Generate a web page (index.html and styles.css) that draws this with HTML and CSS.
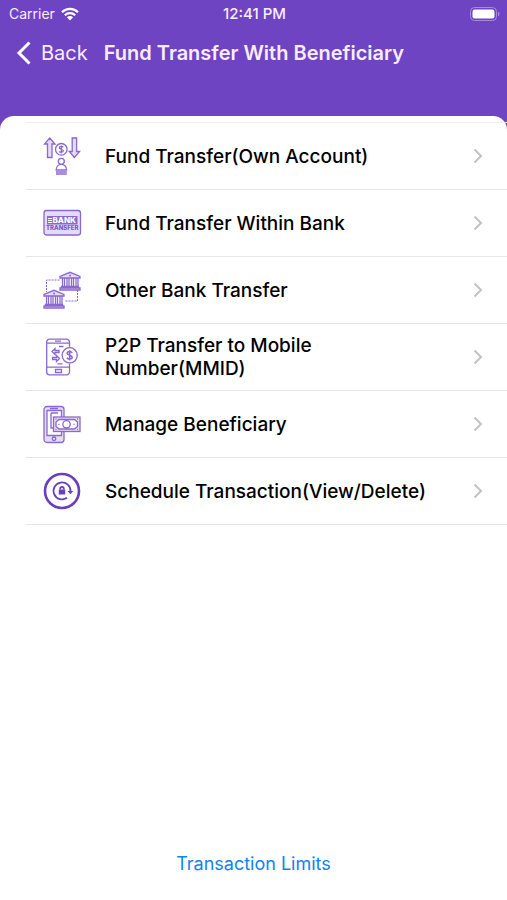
FILE: index.html
```html
<!DOCTYPE html>
<html lang="en">

<head>
    <meta charset="UTF-8">
    <meta name="viewport" content="width=device-width, initial-scale=1.0">
    <title>Fund Transfer With Beneficiary</title>
    <link rel="stylesheet" href="styles.css">
</head>

<body>
    <header class="header">
        <div class="statusBar">
            <div class="carrier">
                <span>Carrier</span>
                <svg class="wifi" viewBox="0 0 18 14">
                    <path d="M1 5.2a11.5 11.5 0 0 1 16 0M3.8 8.2a7.5 7.5 0 0 1 10.4 0" fill="none" stroke="#fff" stroke-width="2.2" />
                    <path d="M9 13.4L5.9 10.2a4.4 4.4 0 0 1 6.2 0z" fill="#fff" />
                </svg>
            </div>
            <span class="time">12:41 PM</span>
            <svg class="battery" viewBox="0 0 30 14">
                <rect x="0.5" y="0.5" width="26" height="13" rx="4" fill="none" stroke="#a68bdc" />
                <rect x="2.5" y="2.5" width="22" height="9" rx="2.2" fill="#fff" />
                <path d="M28 4.5c2 1 2 4 0 5z" fill="#a68bdc" />
            </svg>
        </div>
        <nav class="navBar">
            <button class="backBtn" type="button">
                <svg class="backIcon" viewBox="0 0 16 24">
                    <path d="M13.5 1.5L3 12l10.5 10.5" fill="none" stroke="#fff" stroke-width="3" />
                </svg>
                <span>Back</span>
            </button>
            <h1 class="title">Fund Transfer With Beneficiary</h1>
        </nav>
    </header>

    <main class="card">
        <ul class="menu">
            <li>
                <a class="menuItem" href="#own">
                    <svg class="icon" viewBox="0 0 40 40">
                        <path class="tint" d="M7.7 2L13 8h-3v13.500H5.500V8H2.500zM32.400 21.500L27.200 15.500h3V2h4.400v13.500h3z" />
                        <circle cx="19.3" cy="13.3" r="5.8" />
                        <path d="M21.3 11.3c-.8-1.200-4-1.200-4 .5s4 1.200 4 3-3.200 1.800-4.200.5M19.300 9.500v7.700" />
                        <circle cx="19.3" cy="25.3" r="3" />
                        <path d="M14.2 34c0-7.500 10.400-7.500 10.400 0zM14 36h10.800M14 38h10.800" />
                    </svg>
                    <span class="label">Fund Transfer(Own Account)</span>
                    <svg class="arrow" viewBox="0 0 10 16"><path d="M1.5 1.5L8 8l-6.5 6.5" /></svg>
                </a>
            </li>
            <li>
                <a class="menuItem" href="#within">
                    <svg class="icon" viewBox="0 0 40 40">
                        <rect class="tint" x="2" y="7.5" width="36.5" height="24.5" rx="2.5" />
                        <rect class="fill" x="5" y="13" width="30.5" height="8.5" />
                        <path class="white" d="M6 15.500h4M6 17.500h4M6 19.500h4" />
                        <text class="bankText" x="10.500" y="20.200">BANK</text>
                        <text class="transferText" x="4" y="27">TRANSFER</text>
                    </svg>
                    <span class="label">Fund Transfer Within Bank</span>
                    <svg class="arrow" viewBox="0 0 10 16"><path d="M1.5 1.5L8 8l-6.5 6.5" /></svg>
                </a>
            </li>
            <li>
                <a class="menuItem" href="#other">
                    <svg class="icon" viewBox="0 0 40 40">
                        <path class="dash" d="M17.5 10H4.5v12M35.500 20v11H23" />
                        <path class="tint" d="M18 8V6.500L28 2.300l10 4.200V8zM19.500 16.500h17v1.500h-17zM18 18h20v2H18z" />
                        <path d="M20.5 8v8.500M22.500 8v8.500M25 8v8.500M27 8v8.500M29.500 8v8.500M31.500 8v8.500M34 8v8.500M36 8v8.500" />
                        <circle class="fill" cx="28" cy="5.5" r="1" />
                        <path class="tint" d="M2 26v-1.500l10-4.200 10 4.200V26zM3.500 34.500h17V36h-17zM2 36h20v2H2z" />
                        <path d="M4.5 26v8.500M6.500 26v8.500M9 26v8.500M11 26v8.500M13.500 26v8.500M15.500 26v8.500M18 26v8.500M20 26v8.500" />
                        <circle class="fill" cx="12" cy="23.5" r="1" />
                    </svg>
                    <span class="label">Other Bank Transfer</span>
                    <svg class="arrow" viewBox="0 0 10 16"><path d="M1.5 1.5L8 8l-6.5 6.5" /></svg>
                </a>
            </li>
            <li>
                <a class="menuItem" href="#p2p">
                    <svg class="icon" viewBox="0 0 40 40">
                        <path d="M27.5 10V5a2.800 2.800 0 0 0-2.800-2.800H7.500A2.800 2.800 0 0 0 4.700 5v30a2.800 2.800 0 0 0 2.800 2.800h17.200a2.800 2.800 0 0 0 2.800-2.800v-8.500" />
                        <path d="M4.7 6.200h22.800M4.700 30.200h22.800M13 4.200h6M13.500 32.500v3h6v-3z" />
                        <circle cx="27.7" cy="18.3" r="7.6" />
                        <path class="bold" d="M30.2 15.800c-1-1.800-5-1.600-5 .4s5 1.900 5 4.100-4.300 2.300-5.200.3M27.700 13.200v10.200" />
                        <path d="M10 14.500l3-3v2h4v2h-4v2zM17.500 21.500l-3-3v2h-4v2h4v2zM17 9.500h4.500M15.500 26.800h5" />
                    </svg>
                    <span class="label">P2P Transfer to Mobile Number(MMID)</span>
                    <svg class="arrow" viewBox="0 0 10 16"><path d="M1.5 1.5L8 8l-6.5 6.5" /></svg>
                </a>
            </li>
            <li>
                <a class="menuItem" href="#manage">
                    <svg class="icon" viewBox="0 0 40 40">
                        <rect class="tint" x="2" y="2.5" width="20" height="36" rx="3" />
                        <path class="inner" d="M5 6.500h14.500v25H5z" />
                        <path d="M8 4.500h8M9 9h7M9 9v15h3" />
                        <circle cx="12" cy="34.800" r="1.8" />
                        <rect class="tint" x="11.5" y="13" width="26.5" height="14.5" />
                        <path class="inner" d="M17 15.500h15.500l3 2.500v4.500l-3 2.500H17l-3-2.500V18z" />
                        <circle cx="24.5" cy="20.3" r="3.7" />
                        <path d="M13.5 15h1M35 15h1M13.500 25.500h1M35 25.500h1M16.500 20.300h1M31.500 20.300h1" />
                    </svg>
                    <span class="label">Manage Beneficiary</span>
                    <svg class="arrow" viewBox="0 0 10 16"><path d="M1.5 1.5L8 8l-6.5 6.5" /></svg>
                </a>
            </li>
            <li>
                <a class="menuItem" href="#schedule">
                    <svg class="icon dark" viewBox="0 0 40 40">
                        <circle class="ring" cx="20" cy="20" r="17" />
                        <path class="turn" d="M25 26.800a8.500 8.500 0 1 1 3.500-6.300" />
                        <path class="fill" d="M25.5 20h5.800l-2.900 3.300zM16.800 18.500h6.400v5h-6.400z" />
                        <path class="turn" d="M18.200 18.500v-.8a1.800 1.800 0 0 1 3.600 0v.8" />
                    </svg>
                    <span class="label">Schedule Transaction(View/Delete)</span>
                    <svg class="arrow" viewBox="0 0 10 16"><path d="M1.5 1.5L8 8l-6.5 6.5" /></svg>
                </a>
            </li>
        </ul>
        <a class="limits" href="#limits">Transaction Limits</a>
    </main>
</body>

</html>
```
FILE: styles.css
```css
* {
    box-sizing: border-box;
}

body {
    margin: 0;
    min-height: 100vh;
    display: flex;
    flex-direction: column;
    background-color: #6e44c3;
    font-family: Inter, "Liberation Sans", sans-serif;
}

.header {
    height: 116px;
    color: #f8ecff;
}

.statusBar {
    display: grid;
    grid-template-columns: 1fr auto 1fr;
    align-items: center;
    height: 27px;
    padding: 0 7px 0 9px;
    font-size: 14px;
}

.carrier {
    display: flex;
    align-items: center;
    gap: 6px;
}

.wifi {
    width: 18px;
    height: 14px;
}

.time {
    font-size: 15px;
    font-weight: 500;
}

.battery {
    width: 30px;
    height: 14px;
    justify-self: end;
}

.navBar {
    display: flex;
    align-items: center;
    gap: 16px;
    height: 51px;
    padding: 0 16px;
}

.backBtn {
    display: flex;
    align-items: center;
    gap: 9px;
    padding: 0;
    border: none;
    background: none;
    color: inherit;
    font-family: inherit;
    font-size: 20px;
}

.backIcon {
    width: 16px;
    height: 24px;
}

.title {
    margin: 0;
    font-size: 20px;
    font-weight: 600;
}

.card {
    flex: 1;
    display: flex;
    flex-direction: column;
    padding-top: 6px;
    background-color: #fff;
    border-radius: 14px 14px 0 0;
}

.menu {
    list-style: none;
    margin: 0 0 0 26px;
    padding: 0;
    border-top: 1px solid #f0f0f0;
}

.menuItem {
    display: flex;
    align-items: center;
    height: 67px;
    padding: 0 24px 0 16px;
    border-bottom: 1px solid #e6e6e6;
    color: #000;
    text-decoration: none;
}

.label {
    flex: 1;
    padding: 0 40px 0 23px;
    font-size: 19px;
    font-weight: 500;
    line-height: 23px;
}

.icon {
    flex: none;
    width: 40px;
    height: 40px;
    fill: none;
    stroke: #8a68d0;
    stroke-width: 1.3;
}

.tint {
    fill: #e4dbf6;
}

.inner {
    fill: #fff;
}

.fill {
    fill: #8a68d0;
    stroke: none;
}

.white {
    stroke: #fff;
    stroke-width: 1;
}

.bold {
    stroke-width: 1.6;
}

.dash {
    stroke-width: 1;
    stroke-dasharray: 2 1;
}

.bankText {
    fill: #fff;
    stroke: none;
    font-size: 8px;
    font-weight: 800;
}

.transferText {
    fill: #7a54c8;
    stroke: none;
    font-size: 6px;
    font-weight: 800;
}

.dark {
    stroke: #6a3fbd;
}

.dark .fill {
    fill: #6a3fbd;
}

.ring {
    stroke-width: 2.6;
}

.turn {
    stroke-width: 1.8;
}

.arrow {
    flex: none;
    width: 10px;
    height: 16px;
    fill: none;
    stroke: #c2c2c4;
    stroke-width: 2;
}

.limits {
    margin: auto auto 24px;
    color: #1183ee;
    font-size: 18px;
    line-height: 24px;
    text-decoration: none;
}
```
